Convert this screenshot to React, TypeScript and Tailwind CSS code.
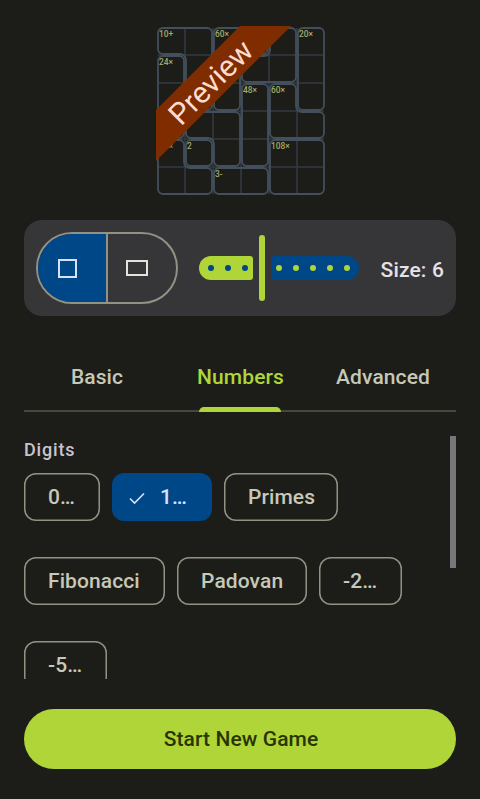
import React from "react";

type Point = [number, number];

const CELL = 28;
const INSET = 1;

// Cage outlines, clockwise, in cell units.
const cages: { outline: Point[]; label?: string }[] = [
  { outline: [[0, 0], [2, 0], [2, 3], [1, 3], [1, 1], [0, 1]], label: "10+" },
  { outline: [[2, 0], [4, 0], [4, 1], [3, 1], [3, 3], [2, 3]], label: "60×" },
  { outline: [[4, 0], [5, 0], [5, 2], [3, 2], [3, 1], [4, 1]] },
  { outline: [[5, 0], [6, 0], [6, 3], [5, 3]], label: "20×" },
  { outline: [[0, 1], [1, 1], [1, 4], [0, 4]], label: "24×" },
  { outline: [[3, 2], [4, 2], [4, 5], [3, 5]], label: "48×" },
  { outline: [[4, 2], [5, 2], [5, 3], [6, 3], [6, 4], [4, 4]], label: "60×" },
  { outline: [[1, 3], [3, 3], [3, 5], [2, 5], [2, 4], [1, 4]] },
  { outline: [[0, 4], [1, 4], [1, 5], [2, 5], [2, 6], [0, 6]], label: "15×" },
  { outline: [[1, 4], [2, 4], [2, 5], [1, 5]], label: "2" },
  { outline: [[4, 4], [6, 4], [6, 6], [4, 6]], label: "108×" },
  { outline: [[2, 5], [4, 5], [4, 6], [2, 6]], label: "3-" },
];

function cagePath(outline: Point[]): string {
  const n = outline.length;
  const corners = outline.map(([x, y], i) => {
    const [px, py] = outline[(i + n - 1) % n];
    const [nx, ny] = outline[(i + 1) % n];
    const a: Point = [Math.sign(x - px), Math.sign(y - py)];
    const b: Point = [Math.sign(nx - x), Math.sign(ny - y)];
    const cx = x * CELL + (-a[1] - b[1]) * INSET;
    const cy = y * CELL + (a[0] + b[0]) * INSET;
    const convex = a[0] * b[1] - a[1] * b[0] > 0;
    const r = convex ? 5 : 6;
    return { sx: cx - a[0] * r, sy: cy - a[1] * r, ex: cx + b[0] * r, ey: cy + b[1] * r, r, sweep: convex ? 1 : 0 };
  });
  return (
    corners
      .map((c, i) => `${i ? "L" : "M"}${c.sx} ${c.sy}A${c.r} ${c.r} 0 0 ${c.sweep} ${c.ex} ${c.ey}`)
      .join("") + "Z"
  );
}

function PuzzlePreview() {
  return (
    <svg
      className="block h-[170px] w-[170px] font-normal tracking-normal"
      viewBox="156 26 170 170"
      fontFamily="Roboto, sans-serif"
    >
      <g transform="translate(157 27)">
        <g stroke="#333a41" strokeWidth="1.6">
          {[1, 2, 3, 4, 5].map((i) => (
            <React.Fragment key={i}>
              <line x1={i * CELL} x2={i * CELL} y1="1" y2="167" />
              <line y1={i * CELL} y2={i * CELL} x1="1" x2="167" />
            </React.Fragment>
          ))}
        </g>
        {cages.map((c, i) => (
          <g key={i}>
            <path d={cagePath(c.outline)} fill="none" stroke="#434f5c" strokeWidth="1.8" />
            {c.label && (
              <text
                x={c.outline[0][0] * CELL + 1.9}
                y={c.outline[0][1] * CELL + 10}
                fontSize="8.4"
                fontWeight="500"
                fill="#a1ae69"
              >
                {c.label}
              </text>
            )}
          </g>
        ))}
      </g>
      <polygon points="240,26 291,26 156,161 156,110" fill="#7e2c00" />
      <text transform="translate(211 82.5) rotate(-45)" textAnchor="middle" y="10" fontSize="30" fill="#ffdbcf">
        Preview
      </text>
    </svg>
  );
}

function Dots({ count, className }: { count: number; className: string }) {
  return (
    <>
      {Array.from({ length: count }, (_, i) => (
        <span key={i} className={`size-1.5 rounded-full ${className}`} />
      ))}
    </>
  );
}

function Chip({ label, className, selected }: { label: string; className: string; selected?: boolean }) {
  return (
    <button
      className={`flex h-12 items-center rounded-xl ${
        selected
          ? "bg-[#004788] pl-[17px] text-[#d5e3ff]"
          : "pl-6 text-[#c7c8b7] shadow-[inset_0_0_0_1.5px_#919283]"
      } ${className}`}
    >
      {selected && (
        <svg className="mr-[15px] h-6 w-4" viewBox="0 0 16 24" fill="none" stroke="currentColor" strokeWidth="1.6">
          <path d="M1 13.5L5.5 18L15 8.5" />
        </svg>
      )}
      <span>{label}</span>
    </button>
  );
}

export default function App() {
  return (
    <div className="flex h-[799px] w-[480px] flex-col overflow-hidden bg-[#1c1d18] px-6 font-['Roboto',sans-serif] text-[21px] leading-[30px] font-medium tracking-[0.1px]">
      <div className="flex justify-center pt-[26px] pl-0.5">
        <PuzzlePreview />
      </div>

      <section className="mt-6 flex h-24 shrink-0 items-center rounded-[18px] bg-[#363538] px-3">
        <div className="flex h-[72px] w-[142px] overflow-hidden rounded-full border-2 border-[#919283]">
          <button className="flex w-[70px] items-center border-r-2 border-[#919283] bg-[#004788] pl-5">
            <span className="size-[19px] border-2 border-[#d5e3ff]" />
          </button>
          <button className="flex flex-1 items-center pl-[18px]">
            <span className="h-4 w-[22px] border-2 border-[#e4e3db]" />
          </button>
        </div>
        <div className="ml-[21px] flex h-[66px] w-40 items-center gap-1.5">
          <div className="flex h-6 w-[54px] items-center gap-[11px] rounded-l-[12px] rounded-r-[3px] bg-[#b0d538] pl-[9px]">
            <Dots count={3} className="bg-[#004788]" />
          </div>
          <div className="h-full w-1.5 rounded-full bg-[#b0d538]" />
          <div className="flex h-6 w-[88px] items-center gap-[11px] rounded-l-[3px] rounded-r-[12px] bg-[#004788] pl-[5px]">
            <Dots count={5} className="bg-[#b0d538]" />
          </div>
        </div>
        <span className="ml-auto pt-1 tracking-[0.15px] whitespace-nowrap text-[#e5e1e6]">Size: 6</span>
      </section>

      <nav className="mt-[26px] grid h-[70px] shrink-0 grid-cols-3 border-b-2 border-[#46483c] text-center text-[#c7c8b7]">
        <div className="pt-5 pl-0.5">Basic</div>
        <div className="relative pt-5 pl-px text-[#b0d538]">
          Numbers
          <span className="absolute -bottom-0.5 left-[31px] h-[5px] w-[82px] rounded-t-[5px] bg-[#b0d538]" />
        </div>
        <div className="pt-5 pr-0.5">Advanced</div>
      </nav>

      <main className="mt-6 flex h-[243px] shrink-0 justify-between overflow-hidden">
        <div>
          <h2 className="h-[37px] text-[18px] leading-[28px] tracking-[0.85px] text-[#cac4d0]">Digits</h2>
          <div className="flex flex-col gap-9">
            <div className="flex gap-3">
              <Chip label="0…" className="w-[76px]" />
              <Chip label="1…" className="w-[100px]" selected />
              <Chip label="Primes" className="w-[114px]" />
            </div>
            <div className="flex gap-3">
              <Chip label="Fibonacci" className="w-[141px]" />
              <Chip label="Padovan" className="w-[130px]" />
              <Chip label="-2…" className="w-[83px]" />
            </div>
            <div className="flex">
              <Chip label="-5…" className="w-[83px]" />
            </div>
          </div>
        </div>
        <div className="h-[132px] w-1.5 bg-[#78767b]" />
      </main>

      <button className="mt-[30px] h-[60px] shrink-0 rounded-full bg-[#b0d538] pl-0.5 text-[#293500]">
        Start New Game
      </button>
    </div>
  );
}
